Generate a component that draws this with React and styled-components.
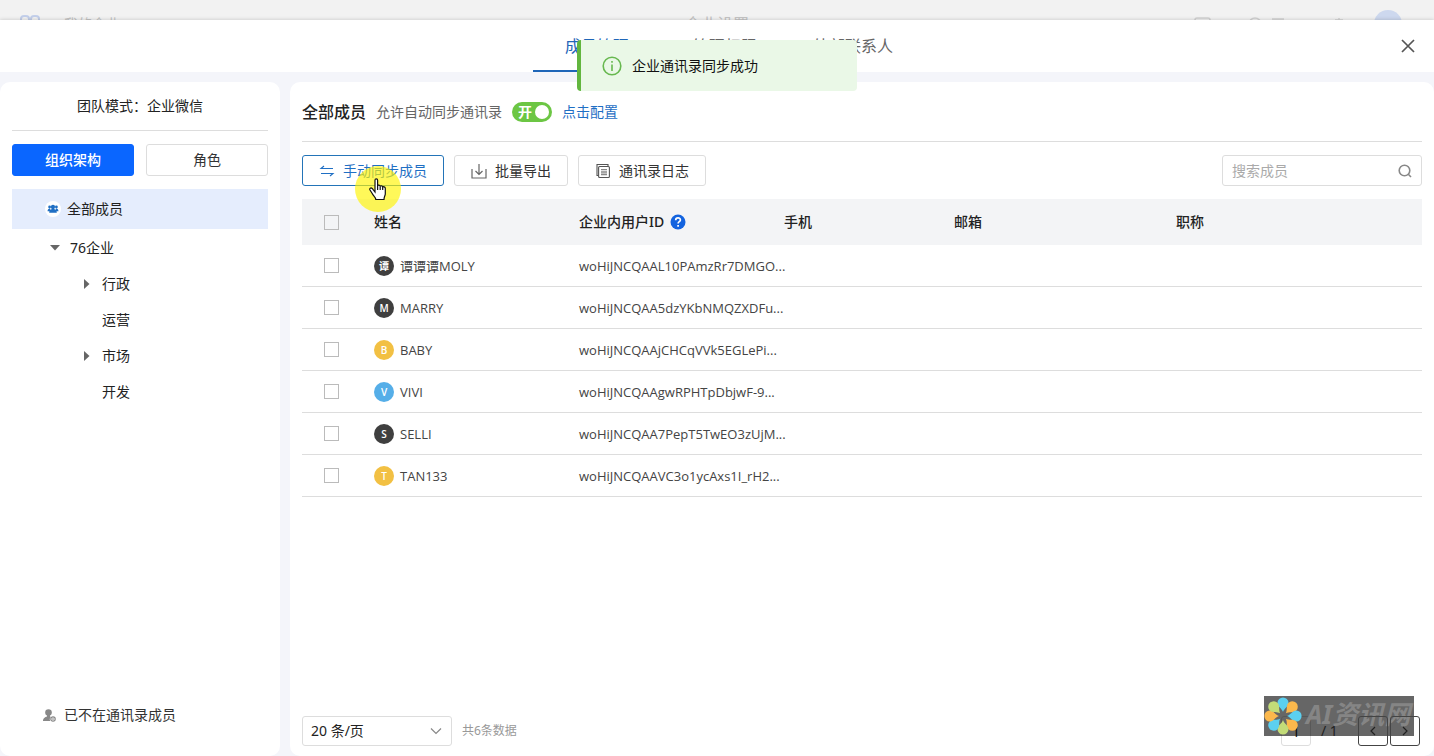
import React, { useState } from 'react';
import styled, { createGlobalStyle } from 'styled-components';

const departments = [
  { name: '行政', hasChildren: true },
  { name: '运营', hasChildren: false },
  { name: '市场', hasChildren: true },
  { name: '开发', hasChildren: false },
];

const members = [
  { name: '谭谭谭MOLY', initial: '谭', color: '#3f3f3f', userId: 'woHiJNCQAAL10PAmzRr7DMGO...' },
  { name: 'MARRY', initial: 'M', color: '#3f3f3f', userId: 'woHiJNCQAA5dzYKbNMQZXDFu...' },
  { name: 'BABY', initial: 'B', color: '#f2c043', userId: 'woHiJNCQAAjCHCqVVk5EGLePi...' },
  { name: 'VIVI', initial: 'V', color: '#55aee8', userId: 'woHiJNCQAAgwRPHTpDbjwF-9...' },
  { name: 'SELLI', initial: 'S', color: '#3f3f3f', userId: 'woHiJNCQAA7PepT5TwEO3zUjM...' },
  { name: 'TAN133', initial: 'T', color: '#f2c043', userId: 'woHiJNCQAAVC3o1ycAxs1I_rH2...' },
];

function CloseIcon() {
  return (
    <svg width="14" height="14" viewBox="0 0 14 14" fill="none" stroke="#555" strokeWidth="1.7">
      <path d="M1 1l12 12M13 1L1 13" />
    </svg>
  );
}

function SyncIcon() {
  return (
    <svg width="16" height="12" viewBox="0 0 16 12" fill="none" stroke="currentColor" strokeWidth="1.1">
      <path d="M5 1L2 3.500h12M2 8.500h12L11 11" />
    </svg>
  );
}

function ExportIcon() {
  return (
    <svg width="16" height="16" viewBox="0 0 16 16" fill="none" stroke="#666" strokeWidth="1.2">
      <path d="M8 1v10.500M4.500 8L8 11.500 11.500 8M1 6v9h14V6" />
    </svg>
  );
}

function LogIcon() {
  return (
    <svg width="16" height="16" viewBox="0 0 16 16" fill="none" stroke="#555" strokeWidth="1.1">
      <path d="M3.500 12.500h-1.500V1.500h11V3" />
      <rect x="3.600" y="3.500" width="10.800" height="11" rx="1" />
      <path d="M6 6.500h6M6 8.200h6M6 9.900h6M6 11.600h6" stroke="#888" />
    </svg>
  );
}

function SearchIcon() {
  return (
    <svg width="14" height="14" viewBox="0 0 14 14" fill="none" stroke="#888" strokeWidth="1.600">
      <circle cx="6.500" cy="6.500" r="5.300" />
      <path d="M10.300 10.300L13 13" />
    </svg>
  );
}

function InfoIcon() {
  return (
    <svg width="20" height="20" viewBox="0 0 20 20" fill="none" stroke="#67b84f" strokeWidth="1.600">
      <circle cx="10" cy="10" r="8.800" />
      <path d="M10 8.500v6.500M10 5v1.800" />
    </svg>
  );
}

function HelpIcon() {
  return (
    <svg width="16" height="16" viewBox="0 0 16 16" fill="none">
      <circle cx="8" cy="8" r="7.500" fill="#1363df" />
      <path d="M5.700 6.200c0-3 4.700-3 4.700-.2 0 1.700-2.300 1.600-2.300 3.400M8.100 11v1.700" stroke="#fff" strokeWidth="1.700" />
    </svg>
  );
}

function GroupIcon() {
  return (
    <svg width="16" height="16" viewBox="0 0 16 16">
      <circle cx="8" cy="8" r="8" fill="#fff" />
      <g fill="#1f6fc4">
        <circle cx="4.600" cy="6" r="1.400" />
        <circle cx="11.400" cy="6" r="1.400" />
        <path d="M2.500 10.300c0-2.300 1.500-2.800 2.600-2.800l.6 2.800zM13.500 10.300c0-2.300-1.500-2.800-2.600-2.800l-.6 2.800z" />
        <path d="M8 3.700c2.800 0 2.300 3.600 1 4.300 1.800.5 2.800 1.600 2.800 3.800H4.200c0-2.200 1-3.300 2.800-3.800-1.300-.7-1.800-4.300 1-4.300z" />
      </g>
    </svg>
  );
}

function RemovedUserIcon() {
  return (
    <svg width="13" height="13" viewBox="0 0 13 13" fill="#888">
      <circle cx="5.500" cy="3.500" r="3.300" />
      <path d="M0 12c0-3 2-3.800 4-4.500V6h3v1.500L8 8c-1.500 1-1.600 2.800-.6 4z" />
      <circle cx="10" cy="10" r="2.200" fill="none" stroke="#888" strokeWidth="1.200" />
      <path d="M9 10h2" stroke="#888" />
    </svg>
  );
}

function ChevronIcon({ direction }) {
  const paths = {
    down: 'M1 3.500l5 5 5-5',
    left: 'M8 2L4 6l4 4',
    right: 'M4 2l4 4-4 4',
  };

  return (
    <svg width="12" height="12" viewBox="0 0 12 12" fill="none" stroke="currentColor" strokeWidth="1.200">
      <path d={paths[direction]} />
    </svg>
  );
}

function HandCursor() {
  return (
    <svg width="18" height="23" viewBox="0 0 18 23" fill="#fff" stroke="#111" strokeWidth="1.200">
      <path d="M6 14V2.300c0-2 2.600-2 2.600 0V8c.3-1.500 2.600-1.200 2.600.5.500-1.200 2.500-.9 2.500.8.700-1 2.600-.7 2.600 1.200v5.200c0 2-1.300 3-1.300 5.800H6.800c0-2.500-2.500-3.500-3.600-6L1 12c-.9-1.600.9-2.800 2.200-1.500z" />
      <path d="M8.600 8v4M11.200 8.500V12M13.700 9.500V12" />
    </svg>
  );
}

function FlowerLogo() {
  const colors = ['#5cd0f0', '#fbb84c', '#5cd0f0', '#fbb84c', '#c3dc78', '#5cd0f0', '#fbb84c', '#c3dc78'];

  return (
    <svg width="38" height="38" viewBox="-19 -19 38 38">
      {colors.map((color, i) => (
        <path
          key={i}
          d="M0-4C-1-7.500-5.500-9.500-5.500-13.300a5.500 5.300 0 0 1 11 0C5.500-9.500 1-7.500 0-4z"
          fill={color}
          transform={`rotate(${i * 45})`}
        />
      ))}
    </svg>
  );
}

function MemberRow({ member, checked, onToggle }) {
  return (
    <tr>
      <td>
        <Checkbox type="checkbox" aria-label={member.name} checked={checked} onChange={onToggle} />
      </td>
      <td>
        <Member>
          <Avatar $color={member.color}>{member.initial}</Avatar>
          {member.name}
        </Member>
      </td>
      <td>{member.userId}</td>
      <td />
      <td />
      <td />
    </tr>
  );
}

function App() {
  const [selected, setSelected] = useState([]);
  const [autoSync, setAutoSync] = useState(true);

  const toggleMember = (name) => {
    setSelected(selected.includes(name) ? selected.filter((n) => n !== name) : [...selected, name]);
  };

  const toggleAll = () => {
    setSelected(selected.length === members.length ? [] : members.map((m) => m.name));
  };

  return (
    <Page>
      <GlobalStyle />
      <Backdrop>
        <BackdropBrand>
          <svg width="20" height="20" viewBox="0 0 20 20" fill="none" stroke="#c3cfea" strokeWidth="2">
            <rect x="1" y="2" width="8" height="8" rx="3" />
            <rect x="11" y="2" width="8" height="8" rx="3" />
          </svg>
          <span>我的企业</span>
        </BackdropBrand>
        <span>企业设置</span>
        <BackdropTools>
          <svg width="170" height="20" viewBox="0 0 170 20" fill="none" stroke="#d2d2d2" strokeWidth="1.500">
            <rect x="1" y="8" width="15" height="14" rx="2" />
            <circle cx="61" cy="14" r="6" />
            <path d="M78 9h12M145 12v-4M141 10h8" />
          </svg>
          <BackdropAvatar />
        </BackdropTools>
      </Backdrop>

      <Dialog role="dialog" aria-label="企业设置">
        <Header>
          <Tabs>
            <Tab href="#members" $active>成员管理</Tab>
            <Tab href="#permissions">管理权限</Tab>
            <Tab href="#contacts">外部联系人</Tab>
          </Tabs>
          <CloseButton type="button" aria-label="关闭"><CloseIcon /></CloseButton>
          <Toast role="status">
            <InfoIcon />
            企业通讯录同步成功
          </Toast>
        </Header>

        <Body>
          <Sidebar>
            <TeamMode>团队模式：企业微信</TeamMode>
            <Switcher>
              <SwitchButton type="button" $active>组织架构</SwitchButton>
              <SwitchButton type="button">角色</SwitchButton>
            </Switcher>
            <AllMembers type="button">
              <GroupIcon />
              全部成员
            </AllMembers>
            <Tree>
              <TreeItem>
                <Caret $open />
                76企业
              </TreeItem>
              {departments.map((dept) => (
                <TreeItem key={dept.name} $nested>
                  <Caret $hidden={!dept.hasChildren} />
                  {dept.name}
                </TreeItem>
              ))}
            </Tree>
            <RemovedMembers href="#removed">
              <RemovedUserIcon />
              已不在通讯录成员
            </RemovedMembers>
          </Sidebar>

          <Main>
            <TitleBar>
              <h2>全部成员</h2>
              <label htmlFor="auto-sync">允许自动同步通讯录</label>
              <Toggle>
                <input
                  id="auto-sync"
                  type="checkbox"
                  checked={autoSync}
                  onChange={() => setAutoSync(!autoSync)}
                />
                <span>开</span>
              </Toggle>
              <a href="#config">点击配置</a>
            </TitleBar>

            <Toolbar>
              <ToolButton type="button" $primary>
                <SyncIcon />
                手动同步成员
                <Pointer><HandCursor /></Pointer>
              </ToolButton>
              <ToolButton type="button">
                <ExportIcon />
                批量导出
              </ToolButton>
              <ToolButton type="button">
                <LogIcon />
                通讯录日志
              </ToolButton>
              <Search>
                <input type="text" placeholder="搜索成员" aria-label="搜索成员" />
                <SearchIcon />
              </Search>
            </Toolbar>

            <Table>
              <colgroup>
                <col width="60" />
                <col width="205" />
                <col width="205" />
                <col width="170" />
                <col width="222" />
                <col />
              </colgroup>
              <thead>
                <tr>
                  <th>
                    <Checkbox
                      type="checkbox"
                      aria-label="全选"
                      checked={selected.length === members.length}
                      onChange={toggleAll}
                    />
                  </th>
                  <th>姓名</th>
                  <th>
                    <HeadCell>
                      企业内用户ID
                      <HelpIcon />
                    </HeadCell>
                  </th>
                  <th>手机</th>
                  <th>邮箱</th>
                  <th>职称</th>
                </tr>
              </thead>
              <tbody>
                {members.map((member) => (
                  <MemberRow
                    key={member.name}
                    member={member}
                    checked={selected.includes(member.name)}
                    onToggle={() => toggleMember(member.name)}
                  />
                ))}
              </tbody>
            </Table>

            <Footer>
              <PageSize>
                <select aria-label="每页条数" defaultValue="20">
                  <option value="20">20 条/页</option>
                  <option value="50">50 条/页</option>
                </select>
                <ChevronIcon direction="down" />
              </PageSize>
              <Total>共6条数据</Total>
              <Pager>
                <PageInput type="text" aria-label="页码" defaultValue="1" />
                <PageCount>/ 1</PageCount>
                <PageButton type="button" aria-label="上一页"><ChevronIcon direction="left" /></PageButton>
                <PageButton type="button" aria-label="下一页"><ChevronIcon direction="right" /></PageButton>
              </Pager>
              <Watermark>
                <FlowerLogo />
                AI资讯网
              </Watermark>
            </Footer>
          </Main>
        </Body>
      </Dialog>
    </Page>
  );
}

export default App;

const GlobalStyle = createGlobalStyle`
  * {
    box-sizing: border-box;
  }

  body {
    margin: 0;
    color: #222;
    font: 14px/20px "Noto Sans", "Noto Sans CJK SC", sans-serif;
  }

  button, input, select {
    font: inherit;
    color: inherit;
  }

  svg {
    flex: none;
  }

  a {
    text-decoration: none;
  }
`;

const Page = styled.div`
  display: flex;
  flex-direction: column;
  height: 100vh;
  overflow: hidden;
`;

const Backdrop = styled.div`
  display: grid;
  grid-template-columns: 1fr auto 1fr;
  height: 20px;
  padding: 14px 20px 0;
  overflow: hidden;
  background: #f2f2f2;
  color: #c4c4c4;
  font-size: 16px;
`;

const BackdropBrand = styled.div`
  display: flex;
  gap: 24px;
  font-size: 14px;
`;

const BackdropTools = styled.div`
  display: flex;
  justify-content: flex-end;
  gap: 10px;
  margin-top: -4px;
  padding-right: 12px;
`;

const BackdropAvatar = styled.span`
  width: 28px;
  height: 28px;
  border-radius: 50%;
  background: #cdd8ee;
`;

const Dialog = styled.div`
  display: flex;
  flex: 1;
  flex-direction: column;
  min-height: 0;
  background: #f4f5fa;
  box-shadow: 0 0 4px rgba(0, 0, 0, 0.2);
`;

const Header = styled.header`
  position: relative;
  display: flex;
  justify-content: center;
  height: 52px;
  background: #fff;
`;

const Tabs = styled.nav`
  display: flex;
  margin-left: 16px;
`;

const Tab = styled.a`
  display: flex;
  align-items: center;
  justify-content: center;
  width: 128px;
  padding-top: 2px;
  border-bottom: 2px solid ${({ $active }) => ($active ? '#1f66b8' : 'transparent')};
  color: ${({ $active }) => ($active ? '#1f66b8' : '#666')};
  font-size: 16px;
`;

const CloseButton = styled.button`
  position: absolute;
  top: 14px;
  right: 14px;
  display: flex;
  padding: 5px;
  border: 0;
  background: none;
`;

const Toast = styled.div`
  position: absolute;
  top: 20px;
  left: 50%;
  z-index: 2;
  display: flex;
  align-items: center;
  gap: 10px;
  width: 280px;
  height: 51px;
  padding-left: 21px;
  border-left: 4px solid #62b63f;
  border-radius: 4px;
  background: #eaf8e7;
  color: #111;
  transform: translateX(-50%);
`;

const Body = styled.div`
  display: flex;
  flex: 1;
  gap: 10px;
  min-height: 0;
  padding-top: 10px;
`;

const Sidebar = styled.aside`
  display: flex;
  flex: none;
  flex-direction: column;
  width: 280px;
  padding: 0 12px;
  border-radius: 10px;
  background: #fff;
`;

const TeamMode = styled.div`
  padding: 14px 0;
  border-bottom: 1px solid #ddd;
  text-align: center;
`;

const Switcher = styled.div`
  display: flex;
  gap: 12px;
  padding: 13px 0;
`;

const SwitchButton = styled.button`
  flex: 1;
  height: 32px;
  padding: 0;
  border: 1px solid ${({ $active }) => ($active ? '#0a66ff' : '#ddd')};
  border-radius: 3px;
  background: ${({ $active }) => ($active ? '#0a66ff' : '#fff')};
  color: ${({ $active }) => ($active ? '#fff' : '#333')};
  font-weight: ${({ $active }) => ($active ? 500 : 400)};
`;

const AllMembers = styled.button`
  display: flex;
  align-items: center;
  gap: 6px;
  height: 40px;
  padding: 0 33px;
  border: 0;
  background: #e5edfd;
`;

const Tree = styled.ul`
  flex: 1;
  margin: 0;
  padding: 1px 0 0;
  list-style: none;
`;

const TreeItem = styled.li`
  display: flex;
  align-items: center;
  gap: 10px;
  height: 36px;
  padding-left: ${({ $nested }) => ($nested ? 70 : 38)}px;
`;

const Caret = styled.span`
  width: 10px;
  height: 10px;
  background: #666;
  clip-path: ${({ $open }) => ($open ? 'polygon(0 20%, 100% 20%, 50% 75%)' : 'polygon(20% 0, 75% 50%, 20% 100%)')};
  visibility: ${({ $hidden }) => ($hidden ? 'hidden' : 'visible')};
`;

const RemovedMembers = styled.a`
  display: flex;
  align-items: center;
  gap: 8px;
  padding: 0 31px 31px;
  color: #333;
`;

const Main = styled.main`
  display: flex;
  flex: 1;
  flex-direction: column;
  min-width: 0;
  padding: 0 12px;
  border-radius: 10px;
  background: #fff;
`;

const TitleBar = styled.div`
  display: flex;
  align-items: center;
  gap: 10px;
  height: 60px;
  border-bottom: 1px solid #ddd;
  color: #666;

  h2 {
    margin: 0;
    color: #222;
    font-size: 16px;
    font-weight: 500;
  }

  a {
    color: #1f6fc4;
  }
`;

const Toggle = styled.span`
  display: flex;
  align-items: center;
  position: relative;
  width: 40px;
  height: 20px;
  padding-left: 6px;
  border-radius: 10px;
  background: #6cc644;
  color: #fff;
  font-weight: 700;

  input {
    position: absolute;
    inset: 0;
    margin: 0;
    appearance: none;
  }

  &::after {
    content: '';
    width: 14px;
    height: 14px;
    margin-left: 3px;
    border-radius: 50%;
    background: #fff;
  }
`;

const Toolbar = styled.div`
  display: flex;
  gap: 10px;
  padding: 13px 0;
`;

const ToolButton = styled.button`
  position: relative;
  display: flex;
  align-items: center;
  gap: 8px;
  height: 31px;
  padding: 0 16px;
  border: 1px solid ${({ $primary }) => ($primary ? '#2374b8' : '#ddd')};
  border-radius: 3px;
  background: #fff;
  color: ${({ $primary }) => ($primary ? '#1f6fc4' : '#333')};
`;

const Pointer = styled.span`
  position: absolute;
  top: 10px;
  left: 52px;
  z-index: 1;
  display: flex;
  align-items: center;
  justify-content: center;
  width: 46px;
  height: 46px;
  border-radius: 50%;
  background: rgba(255, 245, 0, 0.65);
  pointer-events: none;
`;

const Search = styled.div`
  display: flex;
  align-items: center;
  width: 200px;
  height: 31px;
  margin-left: auto;
  padding: 0 9px;
  border: 1px solid #ddd;
  border-radius: 3px;

  input {
    flex: 1;
    min-width: 0;
    padding: 0;
    border: 0;
    outline: 0;
  }

  input::placeholder {
    color: #aaa;
  }
`;

const Table = styled.table`
  width: 100%;
  border-collapse: separate;
  border-spacing: 0;
  table-layout: fixed;
  color: #444;
  font-size: 13px;

  th, td {
    height: 42px;
    padding: 0 0 0 12px;
    border-bottom: 1px solid #ddd;
    text-align: left;
    white-space: nowrap;
  }

  td {
    font-family: "Open Sans", "Noto Sans CJK SC", sans-serif;
  }

  th {
    height: 46px;
    border-bottom: 0;
    background: #f3f4f6;
    color: #222;
    font-size: 14px;
    font-weight: 500;
  }

  th:first-child, td:first-child {
    padding-left: 22px;
  }
`;

const HeadCell = styled.span`
  display: flex;
  align-items: center;
  gap: 6px;
`;

const Checkbox = styled.input`
  display: block;
  width: 15px;
  height: 15px;
  margin: 0;
  border: 1px solid #bbb;
  background: transparent;
  appearance: none;

  &:checked {
    background: #0a66ff;
  }
`;

const Member = styled.span`
  display: flex;
  align-items: center;
  gap: 6px;
`;

const Avatar = styled.span`
  width: 20px;
  height: 20px;
  border-radius: 50%;
  background: ${({ $color }) => $color};
  color: #fff;
  font-size: 10px;
  font-weight: 600;
  text-align: center;
`;

const Footer = styled.footer`
  position: relative;
  display: flex;
  align-items: center;
  gap: 10px;
  margin-top: auto;
  padding-bottom: 10px;
`;

const PageSize = styled.div`
  display: flex;
  align-items: center;
  position: relative;
  width: 150px;
  height: 30px;

  select {
    width: 100%;
    height: 100%;
    padding: 0 8px;
    border: 1px solid #ddd;
    border-radius: 3px;
    background: #fff;
    appearance: none;
  }

  svg {
    position: absolute;
    right: 10px;
    color: #888;
    pointer-events: none;
  }
`;

const Total = styled.span`
  color: #999;
  font-size: 12px;
`;

const Pager = styled.div`
  display: flex;
  align-items: center;
  margin-left: auto;
  padding-right: 2px;
`;

const PageInput = styled.input`
  width: 30px;
  height: 30px;
  padding: 0;
  border: 1px solid #ddd;
  border-radius: 3px;
  text-align: center;
`;

const PageCount = styled.span`
  z-index: 1;
  width: 47px;
  padding-left: 10px;
  color: #222;
`;

const PageButton = styled.button`
  z-index: 1;
  display: flex;
  align-items: center;
  justify-content: center;
  width: 30px;
  height: 30px;
  padding: 0;
  border: 1px solid #444;
  border-radius: 3px;
  background: transparent;

  & + & {
    margin-left: 2px;
  }
`;

const Watermark = styled.div`
  position: absolute;
  right: 8px;
  bottom: 20px;
  display: flex;
  align-items: center;
  gap: 4px;
  width: 150px;
  height: 40px;
  padding-bottom: 4px;
  overflow: hidden;
  background: rgba(0, 0, 0, 0.6);
  color: #858585;
  font-size: 26px;
  font-style: italic;
  font-weight: 700;
  white-space: nowrap;
  pointer-events: none;

  svg {
    margin-top: 4px;
  }
`;
